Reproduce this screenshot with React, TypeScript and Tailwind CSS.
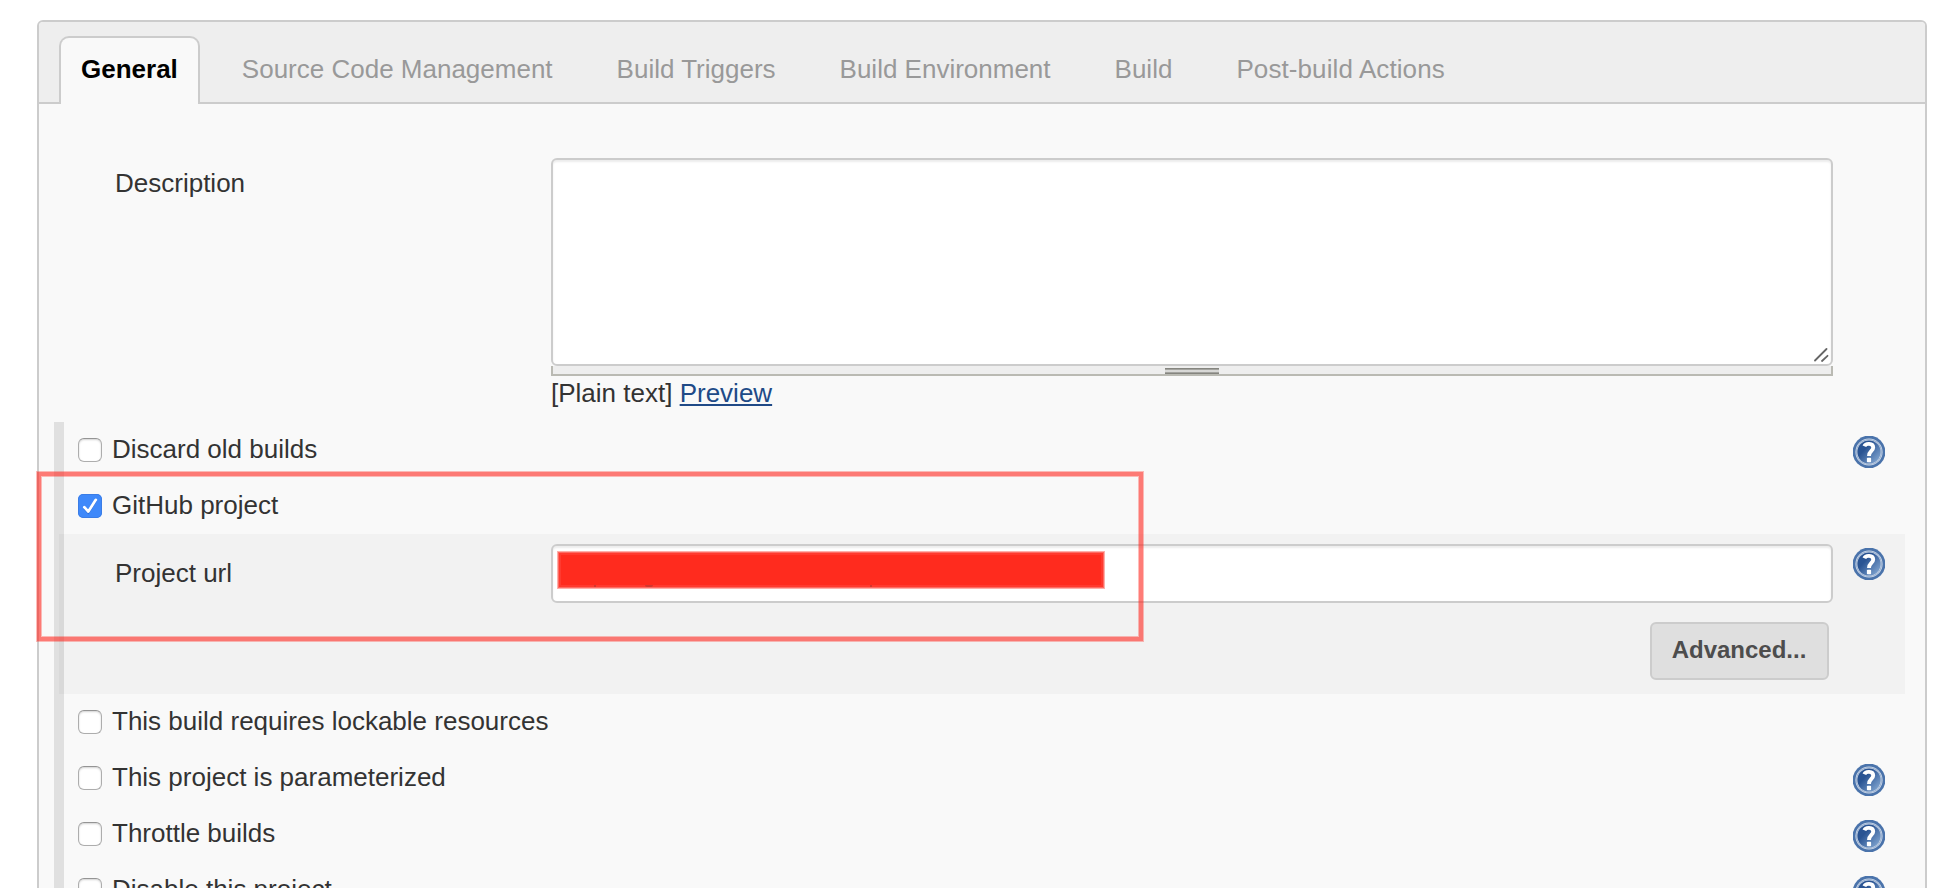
const tabs = ['Source Code Management', 'Build Triggers', 'Build Environment', 'Build'];

function HelpIcon() {
  return (
    <svg viewBox="0 0 32 32" className="mt-3.5 h-8 w-8 shrink-0">
      <defs>
        <linearGradient id="help-fill" x1="0" y1="0.1" x2="0.9" y2="0.9">
          <stop offset="0.35" stopColor="#2a5493" />
          <stop offset="1" stopColor="#7fa3cf" />
        </linearGradient>
      </defs>
      <circle cx="16" cy="16" r="16.4" fill="#4a73ab" />
      <circle cx="16" cy="16" r="13.6" fill="#cfdaea" />
      <circle cx="16" cy="16" r="12.8" fill="#7f9cc4" />
      <circle cx="16" cy="16" r="12.3" fill="#c3d1e4" />
      <circle cx="16" cy="16" r="11.6" fill="url(#help-fill)" />
      <path
        d="M11.4 10.2C12.6 7 20.2 6.8 20.2 11.4C20.2 15 16 14.8 16 20"
        fill="none"
        stroke="#fff"
        strokeWidth="3.9"
      />
      <rect x="13.9" y="21.8" width="4.2" height="4.4" rx="0.8" fill="#fff" />
    </svg>
  );
}

function Checkbox({ checked }: { checked?: boolean }) {
  if (checked) {
    return (
      <svg viewBox="0 0 24 24" className="mt-4 h-6 w-6 shrink-0 rounded-[5px] bg-[#3f89fa]">
        <rect x="0.5" y="0.5" width="23" height="23" rx="4.5" fill="none" stroke="#3b7de6" />
        <path d="M6.3 14.2L10.3 18.6L17.8 6.6" fill="none" stroke="#2f6fd6" strokeWidth="2.4" />
        <path
          d="M6.3 13.2L10.3 17.6L17.8 5.8"
          fill="none"
          stroke="#fff"
          strokeWidth="2.7"
          strokeLinecap="round"
          strokeLinejoin="round"
        />
      </svg>
    );
  }
  return (
    <span className="mt-4 h-6 w-6 shrink-0 rounded-[6px] border border-[#adadad] border-t-[#949494] bg-white shadow-[inset_0_1px_2px_rgba(0,0,0,0.18)]" />
  );
}

function OptionRow({ label, checked, help }: { label: string; checked?: boolean; help?: boolean }) {
  return (
    <label className="flex h-14 shrink-0 pl-6 pr-10">
      <Checkbox checked={checked} />
      <span className="ml-2.5 flex-1 leading-[54px]">{label}</span>
      {help && <HelpIcon />}
    </label>
  );
}

function GripHandle() {
  return (
    <div className="mt-[2px] h-1.5 w-[54px] border-y border-[#85857f] bg-[#d8d8d6]">
      <div className="h-1 border-y border-[#a3a39f]" />
    </div>
  );
}

export default function App() {
  return (
    <div className="relative h-[888px] w-[1958px] overflow-hidden bg-white pl-[37px] pt-5 font-['Liberation_Sans',Arial,sans-serif] text-[26px] text-[#333]">
      <div className="flex h-[880px] w-[1890px] flex-col rounded-t-[6px] border-2 border-[#ccc] bg-[#f9f9f9]">
        <nav className="flex h-[82px] shrink-0 rounded-t-[4px] border-b-2 border-[#ccc] bg-[#eee] pl-5 pt-3.5">
          <div className="h-[68px] rounded-t-[10px] border-2 border-b-0 border-[#ccc] bg-[#f9f9f9] px-5 font-bold leading-[62px] text-black">
            General
          </div>
          <div className="flex gap-16 pl-[42px] pt-0.5 leading-[62px] text-[#999]">
            {tabs.map((t) => (
              <span key={t} className="whitespace-nowrap">
                {t}
              </span>
            ))}
            <span className="whitespace-nowrap tracking-[0.1px]">Post-build Actions</span>
          </div>
        </nav>

        <section className="flex h-[318px] shrink-0 pl-[76px] pt-[54px]">
          <div className="w-[436px] pt-1 leading-[42px]">Description</div>
          <div className="w-[1282px]">
            <div className="flex h-[208px] items-end justify-end rounded-[6px] border-2 border-[#ccc] bg-white pb-0.5 pr-0.5 shadow-[inset_0_2px_2px_rgba(0,0,0,0.075)]">
              <svg viewBox="0 0 16 16" className="h-4 w-4">
                <path d="M2 14.5L13.5 3M9 15L14.5 9.8" stroke="#666" strokeWidth="1.8" strokeLinecap="round" />
              </svg>
            </div>
            <div className="flex h-2.5 justify-center border-2 border-t-0 border-[#babab3] bg-[#eee]">
              <GripHandle />
            </div>
            <div className="leading-[34px]">
              [Plain text]{' '}
              <a className="text-[#204a87] underline decoration-[1.5px] underline-offset-[2px]">Preview</a>
            </div>
          </div>
        </section>

        <div className="flex flex-1 pl-[15px]">
          <div className="w-2.5 shrink-0 bg-[#e0e0e0]" />
          <div className="-ml-2.5 flex w-[1871px] shrink-0 flex-col">
            <OptionRow label="Discard old builds" help />
            <OptionRow label="GitHub project" checked />
            <div className="ml-[5px] h-40 w-[1846px] shrink-0 bg-black/[0.028] pl-14 pt-2.5">
              <div className="flex">
                <div className="w-[436px] leading-[58px]">Project url</div>
                <div className="h-[59px] w-[1282px] rounded-[6px] border-2 border-[#ccc] bg-white pl-1 pt-[5px] shadow-[inset_0_2px_2px_rgba(0,0,0,0.075)]">
                  <div className="h-[38px] w-[548px] border border-[#fdb0ab] bg-[#ff2b1e]">
                    <div className="h-9 border border-[#fe6b63]">
                      <div className="flex h-[34px] items-end border-2 border-[#ff3a2f]">
                        <span className="-mb-[2px] ml-[33px] h-0.5 w-0.5 bg-[#d2372f]" />
                        <span className="-mb-[2px] ml-[49px] h-0.5 w-2 rounded-b bg-[#d2372f]" />
                        <span className="-mb-[2px] ml-[217px] h-0.5 w-0.5 bg-[#d2372f]" />
                      </div>
                    </div>
                  </div>
                </div>
                <div className="-mt-2.5 ml-5">
                  <HelpIcon />
                </div>
              </div>
              <div className="flex justify-end pr-[76px] pt-[19px]">
                <button className="h-[58px] w-[179px] rounded-[6px] border-2 border-[#ccc] bg-[#dfdfdf] pb-[3px] pr-px text-2xl font-bold text-[#4d4d4d]">
                  Advanced...
                </button>
              </div>
            </div>
            <OptionRow label="This build requires lockable resources" />
            <OptionRow label="This project is parameterized" help />
            <OptionRow label="Throttle builds" help />
            <OptionRow label="Disable this project" help />
          </div>
        </div>
      </div>

      {/* Annotation frame lying over the form */}
      <div className="pointer-events-none absolute left-[36px] top-[471px] h-[171px] w-[1108px] border border-[#ff251c]/30">
        <div className="h-full border-4 border-[#ff251c]/60">
          <div className="h-full border border-[#ff251c]/30" />
        </div>
      </div>
    </div>
  );
}
